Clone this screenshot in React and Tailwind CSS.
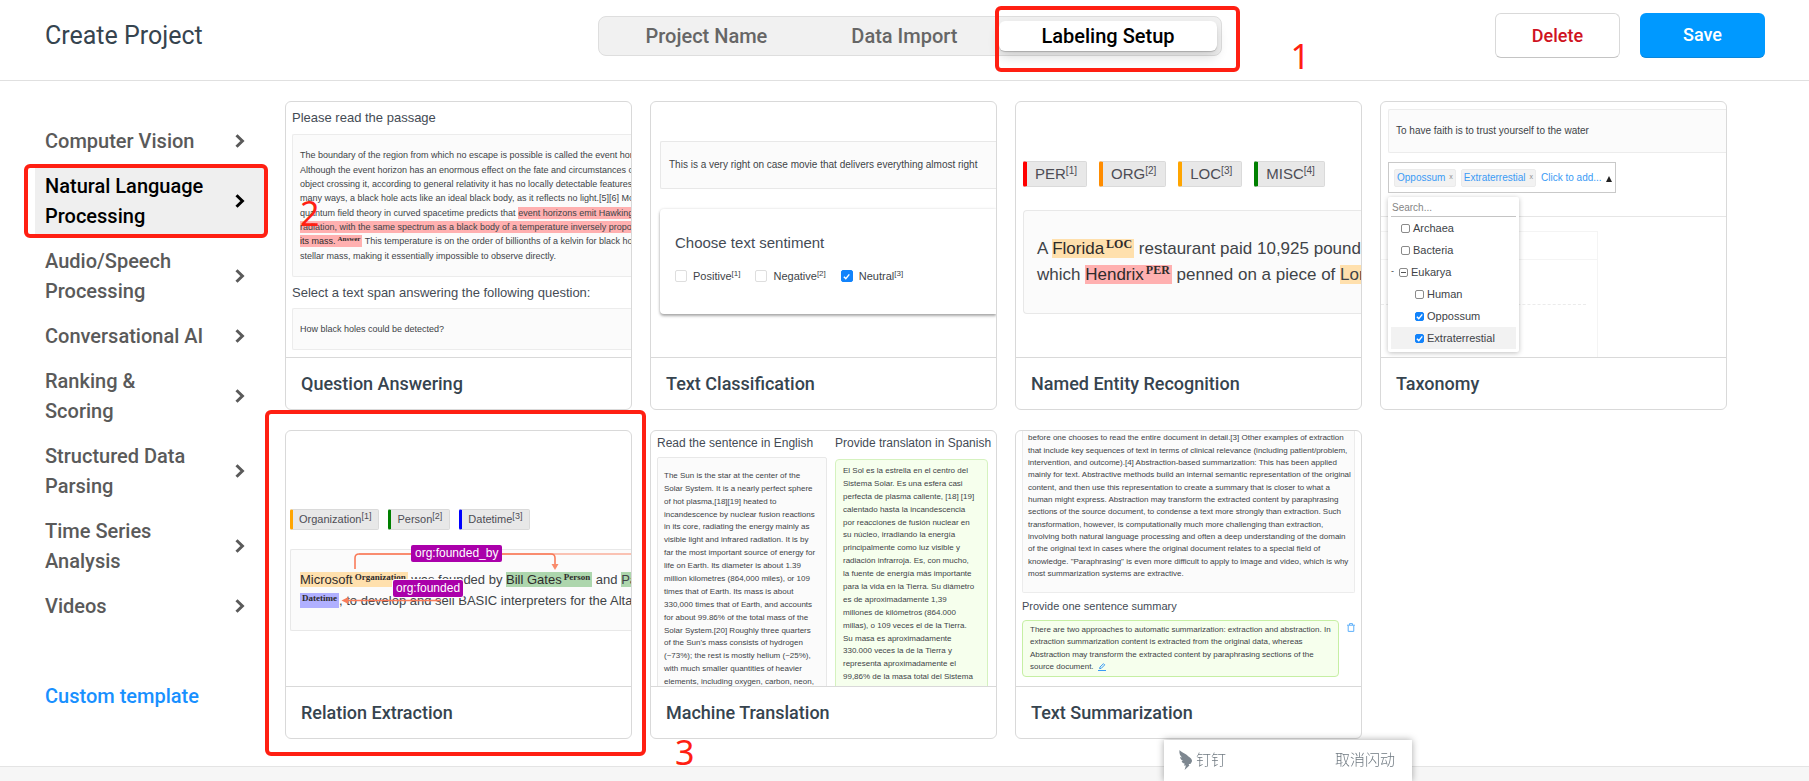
import { useState } from "react";
import clsx from "clsx";

const steps = ["Project Name", "Data Import", "Labeling Setup"];

const groups = [
  "Computer Vision",
  "Natural Language Processing",
  "Audio/Speech Processing",
  "Conversational AI",
  "Ranking & Scoring",
  "Structured Data Parsing",
  "Time Series Analysis",
  "Videos",
];

const templates = [
  { title: "Question Answering", Preview: QuestionAnswering },
  { title: "Text Classification", Preview: TextClassification },
  { title: "Named Entity Recognition", Preview: NamedEntities },
  { title: "Taxonomy", Preview: Taxonomy },
  { title: "Relation Extraction", Preview: RelationExtraction, marker: "3" },
  { title: "Machine Translation", Preview: MachineTranslation },
  { title: "Text Summarization", Preview: TextSummarization },
];

const sunEnglish = [
  "The Sun is the star at the center of the",
  "Solar System. It is a nearly perfect sphere",
  "of hot plasma,[18][19] heated to",
  "incandescence by nuclear fusion reactions",
  "in its core, radiating the energy mainly as",
  "visible light and infrared radiation. It is by",
  "far the most important source of energy for",
  "life on Earth. Its diameter is about 1.39",
  "million kilometres (864,000 miles), or 109",
  "times that of Earth. Its mass is about",
  "330,000 times that of Earth, and accounts",
  "for about 99.86% of the total mass of the",
  "Solar System.[20] Roughly three quarters",
  "of the Sun's mass consists of hydrogen",
  "(~73%); the rest is mostly helium (~25%),",
  "with much smaller quantities of heavier",
  "elements, including oxygen, carbon, neon,",
];

const sunSpanish = [
  "El Sol es la estrella en el centro del",
  "Sistema Solar. Es una esfera casi",
  "perfecta de plasma caliente, [18] [19]",
  "calentado hasta la incandescencia",
  "por reacciones de fusión nuclear en",
  "su núcleo, irradiando la energía",
  "principalmente como luz visible y",
  "radiación infrarroja. Es, con mucho,",
  "la fuente de energía más importante",
  "para la vida en la Tierra. Su diámetro",
  "es de aproximadamente 1,39",
  "millones de kilómetros (864.000",
  "millas), o 109 veces el de la Tierra.",
  "Su masa es aproximadamente",
  "330.000 veces la de la Tierra y",
  "representa aproximadamente el",
  "99,86% de la masa total del Sistema",
  "Solar. [20] Aproximadamente",
];

const articleLines = [
  "paragraphs of a section, and optionally the first and last sentences in a paragraph are read",
  "before one chooses to read the entire document in detail.[3] Other examples of extraction",
  "that include key sequences of text in terms of clinical relevance (including patient/problem,",
  "intervention, and outcome).[4] Abstraction-based summarization: This has been applied",
  "mainly for text. Abstractive methods build an internal semantic representation of the original",
  "content, and then use this representation to create a summary that is closer to what a",
  "human might express. Abstraction may transform the extracted content by paraphrasing",
  "sections of the source document, to condense a text more strongly than extraction. Such",
  "transformation, however, is computationally much more challenging than extraction,",
  "involving both natural language processing and often a deep understanding of the domain",
  "of the original text in cases where the original document relates to a special field of",
  'knowledge. "Paraphrasing" is even more difficult to apply to image and video, which is why',
  "most summarization systems are extractive.",
];

export default function App() {
  const [step, setStep] = useState("Labeling Setup");
  const [group, setGroup] = useState("Natural Language Processing");

  return (
    <div className="flex min-h-screen flex-col overflow-hidden bg-white font-['Roboto',sans-serif]">
      <header className="grid grid-cols-[1fr_auto_1fr] items-center border-b border-[#e0e0e0] pt-[13px] pr-[44px] pb-[22px] pl-[45px]">
        <h1 className="text-[25px] leading-8 text-[#36444f]">Create Project</h1>

        <nav className="ml-[10px] flex rounded-lg border border-[#dedede] bg-[#f1f1f1] p-1">
          {steps.map((name) => (
            <div key={name} className="relative">
              <button
                type="button"
                onClick={() => setStep(name)}
                className={clsx(
                  "h-[30px] rounded-md px-[42px] text-xl leading-[28px] font-medium",
                  step === name
                    ? "bg-white text-black shadow-[0_1px_1px_rgba(0,0,0,0.2),0_6px_12px_rgba(0,0,0,0.14)]"
                    : "text-[#666666]"
                )}
              >
                {name}
              </button>
              {name === "Labeling Setup" && (
                <>
                  <Outline className="-top-[15px] -right-[23px] -bottom-[21px] -left-[4px]" />
                  <Marker className="top-[15px] left-[291px]">1</Marker>
                </>
              )}
            </div>
          ))}
        </nav>

        <div className="flex justify-end gap-5">
          <button
            type="button"
            className="h-[45px] w-[125px] rounded-md border border-[#d9d9d9] border-b-[#c4c4c4] text-lg font-medium text-[#cf1322]"
          >
            Delete
          </button>
          <button
            type="button"
            className="h-[45px] w-[125px] rounded-md border-b border-[#0b86da] bg-[#0099ff] text-lg font-medium text-white"
          >
            Save
          </button>
        </div>
      </header>

      <main className="flex items-start pb-[27px]">
        <aside className="w-[285px] shrink-0 pt-[38px] pr-[21px] pl-[35px]">
          <ul>
            {groups.map((name) => (
              <li key={name} className="relative mb-px">
                <button
                  type="button"
                  onClick={() => setGroup(name)}
                  className={clsx(
                    "flex w-full items-center justify-between py-[7px] pr-[19px] pl-[10px] text-left text-xl leading-[30px] font-medium",
                    group === name ? "bg-[#efefef] text-black" : "text-[#5a5a5a]"
                  )}
                >
                  <span className="w-[162px]">{name}</span>
                  <Chevron />
                </button>
                {name === "Natural Language Processing" && (
                  <>
                    <Outline className="inset-y-0 -right-[4px] -left-[11px]" />
                    <Marker className="top-[29px] left-[265px]">2</Marker>
                  </>
                )}
              </li>
            ))}
          </ul>
          <a href="#custom" className="mt-[53px] block pl-[10px] text-xl leading-[30px] font-medium text-[#1890ff]">
            Custom template
          </a>
        </aside>

        <section className="grid flex-1 grid-cols-4 gap-x-[18px] gap-y-5 pt-5 pr-[82px]">
          {templates.map(({ title, Preview, marker }) => (
            <article key={title} className="relative min-w-0">
              <div className="overflow-hidden rounded-md border border-[#d9d9d9]">
                <div className="h-[255px] overflow-hidden font-['Liberation_Sans',Arial,sans-serif] whitespace-nowrap text-[#404347]">
                  <Preview />
                </div>
                <h2 className="border-t border-[#d9d9d9] px-[15px] text-lg leading-[51px] font-medium text-[#36444f]">
                  {title}
                </h2>
              </div>
              {marker && (
                <>
                  <Outline className="-top-[20px] -right-[14px] -bottom-[17px] -left-[20px]" />
                  <Marker className="-bottom-[33px] left-[390px]">{marker}</Marker>
                </>
              )}
            </article>
          ))}
        </section>
      </main>

      <footer className="min-h-[14px] flex-1 border-t border-[#e4e4e4] bg-[#f6f6f6]" />

      <DingTalkToast />
    </div>
  );
}

/* Red call-outs */

function Outline({ className }) {
  return <span className={clsx("pointer-events-none absolute z-10 rounded-md border-4 border-[#ff1f12]", className)} />;
}

function Marker({ className, children }) {
  return (
    <span
      className={clsx(
        "pointer-events-none absolute z-10 font-['Noto_Sans',sans-serif] text-[34px] leading-10 text-[#ff1f12]",
        className
      )}
    >
      {children}
    </span>
  );
}

function Chevron() {
  return (
    <svg width="10" height="14" viewBox="0 0 10 14" fill="none" stroke="currentColor" strokeWidth="3">
      <path d="M1.5 1.2 7.4 7l-5.9 5.8" />
    </svg>
  );
}

/* Shared bits of the previews */

function Lines({ lines, className }) {
  return (
    <div className={clsx("grid auto-rows-fr items-center", className)}>
      {lines.map((line, i) => (
        <p key={i}>{line}</p>
      ))}
    </div>
  );
}

function Check({ id, label, hint, checked, className, boxClass, gap = "gap-[3px]" }) {
  return (
    <label htmlFor={id} className={clsx("flex items-center", gap, className)}>
      <span className="grid place-items-center">
        <input
          id={id}
          type="checkbox"
          defaultChecked={checked}
          className={clsx(
            "peer col-start-1 row-start-1 appearance-none rounded-xs border checked:border-[#1283fb] checked:bg-[#1283fb]",
            boxClass
          )}
        />
        <svg
          className="pointer-events-none invisible col-start-1 row-start-1 size-[7px] peer-checked:visible"
          viewBox="0 0 8 8"
          fill="none"
          stroke="#fff"
          strokeWidth="1.6"
        >
          <path d="M1 4.2 3.2 6.4 7.2 1.6" />
        </svg>
      </span>
      <span>
        {label}
        {hint && <sup className="text-[8px]">[{hint}]</sup>}
      </span>
    </label>
  );
}

function Tag({ color, hint, hintClass, className, children }) {
  return (
    <span className={clsx("rounded-xs border border-[#dadada] bg-[#e8e8e8] text-[#4d4d55]", color, className)}>
      {children}
      <sup className={hintClass}>[{hint}]</sup>
    </span>
  );
}

function Entity({ color, label, labelClass, children }) {
  return (
    <span className={clsx("pr-[2px] text-[#2e2b2b]", color)}>
      {children}
      <sup className={clsx("ml-[2px] font-['Liberation_Serif',serif] font-bold", labelClass)}>{label}</sup>
    </span>
  );
}

/* Previews */

function QuestionAnswering() {
  return (
    <div className="pl-[6px]">
      <h3 className="text-[13px] leading-8 text-[#444b55]">Please read the passage</h3>
      <Lines
        className="h-[143px] rounded-l-xs border border-r-0 border-[#ececec] bg-[#fbfbfb] px-[7px] pt-[13px] pb-[13px] text-[9px] leading-[14px]"
        lines={[
          "The boundary of the region from which no escape is possible is called the event horizon.",
          "Although the event horizon has an enormous effect on the fate and circumstances of an",
          "object crossing it, according to general relativity it has no locally detectable features. In",
          "many ways, a black hole acts like an ideal black body, as it reflects no light.[5][6] Moreover,",
          <>
            quantum field theory in curved spacetime predicts that{" "}
            <mark className="bg-[#ffb0b0] py-px text-inherit">event horizons emit Hawking</mark>
          </>,
          <mark className="bg-[#ffb0b0] py-px text-inherit">
            radiation, with the same spectrum as a black body of a temperature inversely proportional to
          </mark>,
          <>
            <Entity color="bg-[#ffb0b0] py-px" label="Answer" labelClass="text-[7px]">
              its mass.
            </Entity>{" "}
            This temperature is on the order of billionths of a kelvin for black holes of
          </>,
          "stellar mass, making it essentially impossible to observe directly.",
        ]}
      />
      <h3 className="text-[13px] leading-[31px] text-[#444b55]">Select a text span answering the following question:</h3>
      <p className="h-[42px] rounded-l-xs border border-r-0 border-[#ececec] bg-[#fbfbfb] px-[7px] text-[9px] leading-10">
        How black holes could be detected?
      </p>
    </div>
  );
}

function TextClassification() {
  return (
    <div className="pt-[39px] pl-[9px]">
      <p className="rounded-l-xs border border-r-0 border-[#e8e8e8] bg-[#fbfbfb] pl-[8px] text-[10px] leading-[46px]">
        This is a very right on case movie that delivers everything almost right
      </p>
      <div className="mt-[20px] h-[105px] rounded-l pt-[21px] pl-[15px] shadow-[0_2px_3px_rgba(0,0,0,0.32),0_0_3px_rgba(0,0,0,0.12)]">
        <h3 className="text-[15px] leading-[26px] text-[#444b55]">Choose text sentiment</h3>
        <div className="mt-[13px] flex gap-[15px] text-[11px] leading-[14px]">
          <Check id="positive" label="Positive" hint="1" gap="gap-[6px]" boxClass="size-[12px] border-[#dedede]" />
          <Check id="negative" label="Negative" hint="2" gap="gap-[6px]" boxClass="size-[12px] border-[#dedede]" />
          <Check id="neutral" label="Neutral" hint="3" checked gap="gap-[6px]" boxClass="size-[12px] border-[#dedede]" />
        </div>
      </div>
    </div>
  );
}

function NamedEntities() {
  const tag = "border-l-4 pl-2 pr-[9px] text-[15px] leading-6";
  return (
    <div className="pt-[59px] pl-[7px]">
      <div className="flex gap-3">
        <Tag className={tag} hintClass="text-[10px]" color="border-l-[#ff0000]" hint="1">PER</Tag>
        <Tag className={tag} hintClass="text-[10px]" color="border-l-[#ff8c00]" hint="2">ORG</Tag>
        <Tag className={tag} hintClass="text-[10px]" color="border-l-[#ffa500]" hint="3">LOC</Tag>
        <Tag className={tag} hintClass="text-[10px]" color="border-l-[#008000]" hint="4">MISC</Tag>
      </div>
      <div className="mt-[23px] rounded-l border border-r-0 border-[#e8e8e8] bg-[#fbfbfb] pt-[25px] pb-[25px] pl-[13px] text-[17px] leading-[26px]">
        <p>
          A{" "}
          <Entity color="bg-[#ffe0ad]" label="LOC" labelClass="text-[12px]">Florida</Entity>
          {" "}restaurant paid 10,925 pounds
        </p>
        <p>
          which{" "}
          <Entity color="bg-[#ffb0b0]" label="PER" labelClass="text-[12px]">Hendrix</Entity>
          {" "}penned on a piece of <mark className="bg-[#ffe0ad] text-inherit">London</mark>
        </p>
      </div>
    </div>
  );
}

function Taxonomy() {
  const box = "size-[9px] border-[#8a8a8a]";
  return (
    <div className="relative pt-[7px]">
      <p className="ml-[7px] rounded-l-xs border border-r-0 border-[#ececec] bg-[#fbfbfb] pl-[7px] text-[10px] leading-[42px]">
        To have faith is to trust yourself to the water
      </p>
      <div className="mt-[9px] ml-[7px] flex h-[31px] w-[228px] items-center border border-[#c9c9c9] pl-[5px] text-[10px] text-[#3a9bf5]">
        <span className="mr-[5px] flex h-[18px] items-center gap-1 rounded-xs border border-[#ebebeb] bg-[#f2f2f2] px-[2px]">
          Oppossum <i className="text-[7px] text-[#8d8d8d] not-italic">x</i>
        </span>
        <span className="mr-[5px] flex h-[18px] items-center gap-1 rounded-xs border border-[#ebebeb] bg-[#f2f2f2] px-[2px]">
          Extraterrestial <i className="text-[7px] text-[#8d8d8d] not-italic">x</i>
        </span>
        <button type="button" className="flex items-center gap-1">
          Click to add...
          <svg width="6" height="6" viewBox="0 0 6 6" className="mt-[2px]"><path d="M3 0 6 6H0z" fill="#222" /></svg>
        </button>
      </div>

      {/* the regions panel that the open menu covers */}
      <div className="mt-[23px] h-[140px] border-t border-[#e6e6e6] pt-[14px]">
        <div className="h-[130px] w-[217px] border-t border-r border-[#f4f4f4]">
          <div className="h-[28px] border-b border-[#f4f4f4]" />
          <div className="mr-[11px] h-[45px] border-b border-dashed border-[#ebebeb]" />
        </div>
      </div>

      <div className="absolute top-[95px] left-[7px] w-[131px] rounded-xs bg-white px-[3px] pt-px pb-[3px] text-[11px] shadow-[0_1px_5px_rgba(0,0,0,0.25)]">
        <input
          type="text"
          aria-label="Search"
          placeholder="Search..."
          className="block h-[19px] w-full border-b border-[#c4c4c4] px-px text-[10px] outline-none placeholder:text-[#858585]"
        />
        <Check id="archaea" label="Archaea" className="h-[22px] pl-[10px]" boxClass={box} />
        <Check id="bacteria" label="Bacteria" className="h-[22px] pl-[10px]" boxClass={box} />
        <div className="relative flex items-center">
          <span className="w-[8px] text-[9px]">-</span>
          <Check id="eukarya" label="Eukarya" className="h-[22px]" boxClass={box} />
          <span className="absolute left-[10px] h-px w-[5px] bg-[#555]" />
        </div>
        <Check id="human" label="Human" className="h-[22px] pl-[24px]" boxClass={box} />
        <Check id="oppossum" label="Oppossum" checked className="h-[22px] pl-[24px]" boxClass={box} />
        <Check id="extra" label="Extraterrestial" checked className="h-[22px] bg-[#f2f2f2] pl-[24px]" boxClass={box} />
      </div>
    </div>
  );
}

function RelationExtraction() {
  const tag = "border-l-3 pl-[6px] pr-[7px] text-[11px] leading-[19px]";
  return (
    <div className="pt-[78px] pl-[4px]">
      <div className="flex gap-[9px]">
        <Tag className={tag} hintClass="text-[9px]" color="border-l-[#ffa500]" hint="1">Organization</Tag>
        <Tag className={tag} hintClass="text-[9px]" color="border-l-[#008000]" hint="2">Person</Tag>
        <Tag className={tag} hintClass="text-[9px]" color="border-l-[#0000ff]" hint="3">Datetime</Tag>
      </div>
      <div className="relative mt-[19px] h-[82px] rounded-l-xs border border-r-0 border-[#e8e8e8] bg-[#fbfbfb] pt-[19px] pl-[9px] text-[13px] leading-[21px]">
        <p>
          <Entity color="bg-[#ffe0ad]" label="Organization" labelClass="text-[9px]">Microsoft</Entity>
          {" "}was founded by{" "}
          <Entity color="bg-[#add6ad]" label="Person" labelClass="text-[9px]">Bill Gates</Entity>
          {" "}and <mark className="bg-[#add6ad] text-inherit">Paul Allen</mark>
        </p>
        <p>
          <Entity color="bg-[#b0b0ff]" label="Datetime" labelClass="text-[9px]" />, to develop and sell BASIC
          interpreters for the Altair
        </p>

        <svg className="absolute top-0 left-0" width="352" height="80" viewBox="0 0 352 80" fill="none" stroke="#f97c5a">
          <path d="M64 19V8q0-4 4-4H260q4 0 4 4V14" strokeWidth="1.6" />
          <path d="M68 4H352" strokeWidth="1.6" opacity=".6" />
          <path d="M264 20l-3.500-6h7z" fill="#f98c6c" stroke="none" />
          <path d="M56 50.500H150" strokeWidth="1.600" />
          <path d="M50.500 50.500l7-3.500v7z" fill="#f97c5a" stroke="none" />
        </svg>
        <span className="absolute -top-[5px] left-[120px] rounded-xs bg-[#aa00aa] px-1 text-[12px] leading-[17px] text-white">
          org:founded_by
        </span>
        <span className="absolute top-[30px] left-[102px] rounded-xs bg-[#aa00aa] px-[3px] text-[12px] leading-[17px] text-white ring-1 ring-[#fbfbfb]">
          org:founded
        </span>
      </div>
    </div>
  );
}

function MachineTranslation() {
  return (
    <div className="flex gap-2 pl-[6px] text-[8px] leading-[13px]">
      <div className="w-[170px]">
        <h3 className="text-[12px] leading-[25px] text-[#444b55]">Read the sentence in English</h3>
        <div className="mt-px rounded-t-xs border border-[#e8e8e8] bg-[#fbfbfb] px-[6px] pt-[11px] pb-4">
          <Lines className="h-[219px]" lines={sunEnglish} />
        </div>
      </div>
      <div className="w-[153px]">
        <h3 className="text-[12px] leading-[25px] text-[#444b55]">Provide translaton in Spanish</h3>
        <div className="mt-[3px] rounded-t border border-[#d5f2bf] bg-[#f6ffed] px-[7px] pt-[4px] pb-4">
          <Lines className="h-[232px]" lines={sunSpanish} />
        </div>
      </div>
    </div>
  );
}

function TextSummarization() {
  return (
    <div className="flex h-full flex-col justify-end px-[6px] pb-[9px] text-[8px] leading-[12px]">
      <div className="rounded-b-xs border border-t-0 border-[#ececec] bg-[#fbfbfb] px-[5px] pb-[12px]">
        <Lines className="h-[160px]" lines={articleLines} />
      </div>
      <h3 className="text-[11px] leading-[27px] text-[#444b55]">Provide one sentence summary</h3>
      <div className="flex gap-2">
        <div className="w-[318px] rounded border border-[#c6efa4] bg-[#f6ffed] px-[7px] py-[3px]">
          <Lines
            className="h-[49px]"
            lines={[
              "There are two approaches to automatic summarization: extraction and abstraction. In",
              "extraction summarization content is extracted from the original data, whereas",
              "Abstraction may transform the extracted content by paraphrasing sections of the",
              <span className="flex items-center gap-1">
                source document. <EditIcon />
              </span>,
            ]}
          />
        </div>
        <svg className="mt-[3px]" width="8" height="9" viewBox="0 0 8 9" fill="none" stroke="#5cb0fa">
          <path d="M0 2.200h8M2.500 2V.600h3V2M1.200 2.500v5.900h5.600V2.500" />
        </svg>
      </div>
    </div>
  );
}

function EditIcon() {
  return (
    <svg width="8" height="8" viewBox="0 0 8 8" fill="none" stroke="#3a9bf5">
      <path d="M0 7.500h8M1.600 5.700l.4-1.700L5.500.700l1.200 1.200L3.300 5.300z" />
    </svg>
  );
}

function DingTalkToast() {
  return (
    <div className="fixed right-[397px] bottom-0 z-20 flex h-[41px] w-[248px] items-center justify-between bg-white pr-[17px] pb-[2px] pl-[15px] font-['Noto_Sans_CJK_SC',sans-serif] text-[15px] font-light text-[#6f7981] shadow-[0_0_7px_rgba(0,0,0,0.35)]">
      <span className="flex items-center gap-1">
        <svg width="13" height="20" viewBox="0 0 13 20" fill="#7d8790">
          <path d="M.5 0C2 2.400 7 3.600 9.500 6.500c2 1.300 3.500 2.700 3.500 4.300 0 1.400-1 2.200-1.600 3.200H9.600l.8 1.400L5.600 20l1.300-4.400H4.800l1-1.900C3.800 13.300 2.900 12.200 2.600 11l1.700.1C2.100 9.900 1.300 8.600 1.100 7l2 .6C.9 5.700 0 3 .5 0Z" />
        </svg>
        钉钉
      </span>
      <button type="button">取消闪动</button>
    </div>
  );
}
